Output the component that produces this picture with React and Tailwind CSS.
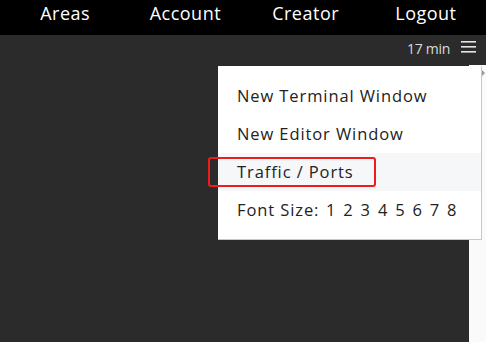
import React from 'react';

const navItems = ['Areas', 'Account', 'Creator', 'Logout'];
const menuItems = ['New Terminal Window', 'New Editor Window', 'Traffic / Ports'];

export default function App() {
  return (
    <div className="relative w-[486px] h-[342px] overflow-hidden bg-[#2b2b2b] flex flex-col font-['Open_Sans','Lato',sans-serif]">
      {/* top nav */}
      <nav className="h-[35px] bg-black grid grid-cols-4 items-center pl-[5px] text-white text-[18px] tracking-[0.5px] shrink-0">
        {navItems.map(n => (
          <a key={n} className="text-center pb-[10px] leading-[26px]">{n}</a>
        ))}
      </nav>

      {/* status bar */}
      <div className="h-[26px] flex items-center justify-end gap-[11px] pr-[10px] text-[#dcdcdc] text-[14px] tracking-[-0.3px] shrink-0">
        <span>17 min</span>
        <svg width="15" height="13" viewBox="0 0 15 13" className="mb-[4px]">
          <rect x="0" y="1" width="15" height="1.6" fill="#e5e5e5" />
          <rect x="0" y="6" width="15" height="1.6" fill="#e5e5e5" />
          <rect x="0" y="11" width="15" height="1.6" fill="#e5e5e5" />
        </svg>
      </div>

      <div className="flex flex-1">
        <div className="flex-1" />
        <div className="w-[17px] mt-[4px] bg-[#fafafa]" />
      </div>

      {/* dropdown */}
      <div className="absolute left-[218px] top-[66px] w-[264px] h-[174px] bg-white border-r border-b border-[#c8c8c8] py-[11px] text-[#222] text-[16.5px] tracking-[0.9px]">
        {menuItems.map((m, i) => (
          <div
            key={m}
            className={`relative h-[38px] flex items-center px-[19px] ${i === 2 ? 'bg-[#f6f7f9]' : ''}`}
          >
            {m}
            {i === 2 && (
              <div className="absolute left-[-10px] top-[4px] w-[168px] h-[30px] border-2 border-[#ee1c1c] rounded-[3px]" />
            )}
          </div>
        ))}
        <div className="h-[38px] flex items-center px-[19px]">
          <span className="w-[89px] shrink-0">Font Size:</span>
          <div className="flex">
            {[1, 2, 3, 4, 5, 6, 7, 8].map(n => (
              <a key={n} className="w-[17.3px] text-left">{n}</a>
            ))}
          </div>
        </div>
        <div className="absolute right-[-4px] top-[4px] w-0 h-0 border-y-[3px] border-y-transparent border-l-[3px] border-l-[#999]" />
      </div>
    </div>
  );
}
